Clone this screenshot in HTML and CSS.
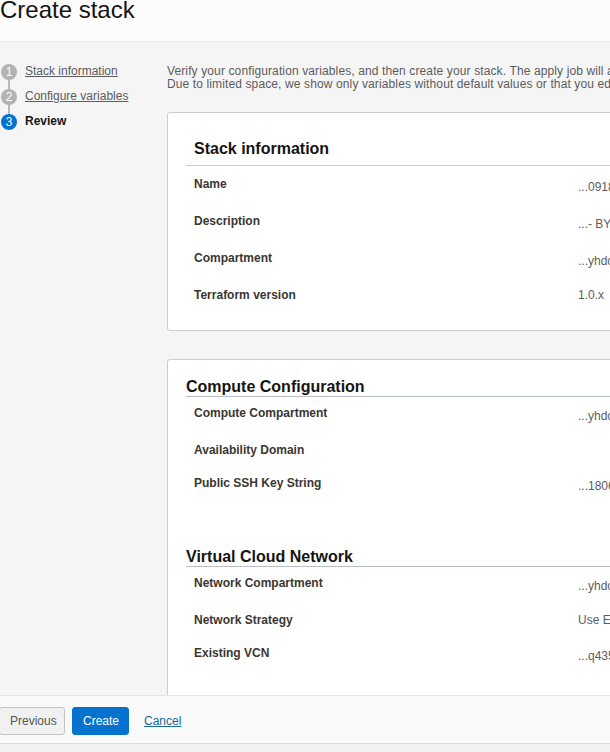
FILE: index.html
```html
<!DOCTYPE html>
<html lang="en">
<head>
<meta charset="utf-8">
<title>Create stack</title>
<link rel="stylesheet" href="styles.css">
</head>
<body>
<div class="page">
  <header class="header">
    <h1 class="title">Create stack</h1>
  </header>
  <div class="body">
    <nav class="steps">
      <div class="step done"><span class="num">1</span><a class="step-link" href="#">Stack information</a></div>
      <div class="step done"><span class="num">2</span><a class="step-link" href="#">Configure variables</a></div>
      <div class="step current"><span class="num">3</span><span class="step-label">Review</span></div>
    </nav>
    <main class="main">
      <p class="intro">Verify your configuration variables, and then create your stack. The apply job will automatically run after the stack is created.<br>Due to limited space, we show only variables without default values or that you edited.</p>

      <section class="card card-info">
        <h2 class="card-title">Stack information</h2>
        <div class="row"><div class="label">Name</div><div class="val trunc">...0918</div></div>
        <div class="row"><div class="label">Description</div><div class="val trunc">...- BY</div></div>
        <div class="row"><div class="label">Compartment</div><div class="val trunc">...yhdc</div></div>
        <div class="row"><div class="label">Terraform version</div><div class="val">1.0.x</div></div>
      </section>

      <section class="card card-vars">
        <div class="group">
          <h3 class="group-title">Compute Configuration</h3>
          <div class="row"><div class="label">Compute Compartment</div><div class="val trunc">...yhdc</div></div>
          <div class="row"><div class="label">Availability Domain</div><div class="val"></div></div>
          <div class="row"><div class="label">Public SSH Key String</div><div class="val trunc">...1806</div></div>
        </div>
        <div class="group">
          <h3 class="group-title">Virtual Cloud Network</h3>
          <div class="row"><div class="label">Network Compartment</div><div class="val trunc">...yhdc</div></div>
          <div class="row"><div class="label">Network Strategy</div><div class="val">Use Existing VCN</div></div>
          <div class="row"><div class="label">Existing VCN</div><div class="val trunc">...q435</div></div>
        </div>
      </section>
    </main>
  </div>
  <footer class="footer">
    <button class="btn btn-secondary" type="button">Previous</button>
    <button class="btn btn-primary" type="button">Create</button>
    <a class="cancel" href="#">Cancel</a>
  </footer>
</div>
</body>
</html>
```
FILE: styles.css
```css
html, body {
  margin: 0;
  padding: 0;
  overflow: hidden;
  background: #f1f1f1;
}
body {
  font-family: "Liberation Sans", Arial, sans-serif;
  font-size: 12px;
  color: #333333;
}
.page {
  width: 900px;
  height: 752px;
  display: flex;
  flex-direction: column;
}
.header {
  height: 41px;
  flex: 0 0 auto;
  background: #fcfcfc;
  border-bottom: 1px solid #e8e8e8;
}
.title {
  margin: 0;
  font-size: 24px;
  font-weight: normal;
  line-height: 20px;
  color: #161513;
}
.body {
  flex: 0 0 653px;
  height: 653px;
  display: flex;
  background: #f5f5f5;
  overflow: hidden;
}
.steps {
  flex: 0 0 167px;
  padding-top: 17px;
}
.step {
  position: relative;
  height: 25px;
  display: flex;
  align-items: center;
  gap: 8px;
  padding-left: 1px;
}
.step + .step::before {
  content: "";
  position: absolute;
  left: 8px;
  top: -6px;
  width: 2px;
  height: 12px;
  background: #b8b8b8;
}
.num {
  position: relative;
  z-index: 1;
  width: 16px;
  height: 16px;
  border-radius: 50%;
  background: #b3b3b3;
  color: #ffffff;
  font-size: 12px;
  line-height: 16px;
  text-align: center;
  flex: 0 0 16px;
}
.current .num {
  background: #0572ce;
}
.step-link {
  color: #5c5c5c;
  text-decoration: underline;
  line-height: 15px;
}
.step-label {
  font-weight: bold;
  color: #161513;
  line-height: 15px;
}
.main {
  flex: 1 1 auto;
  padding-top: 23px;
}
.intro {
  margin: 0 0 21px;
  line-height: 13px;
  letter-spacing: 0.12px;
  color: #5c5c5c;
  white-space: nowrap;
}
.card {
  width: 720px;
  background: #ffffff;
  border: 1px solid #c9cdd2;
  border-radius: 3px;
  padding: 0 18px;
}
.card-info {
  padding-top: 27px;
  padding-bottom: 9px;
  margin-bottom: 28px;
}
.card-title {
  margin: 0 0 11px;
  padding: 0 8px 7px;
  font-size: 16px;
  line-height: 18px;
  font-weight: bold;
  color: #161513;
  border-bottom: 1px solid #c5cad0;
}
.card-vars {
  padding-top: 18px;
  padding-bottom: 20px;
}
.group + .group {
  margin-top: 35px;
}
.group-title {
  margin: 0 0 9px;
  font-size: 16px;
  line-height: 18px;
  font-weight: bold;
  color: #161513;
  border-bottom: 1px solid #b9bec5;
}
.row {
  display: flex;
  align-items: flex-start;
  padding: 0 0 18px 8px;
}
.label {
  flex: 0 0 384px;
  font-weight: bold;
  color: #3a3632;
  line-height: 15px;
}
.val {
  color: #5c5c5c;
  line-height: 15px;
  min-height: 15px;
}
.val.trunc {
  padding-top: 3px;
  padding-bottom: 1px;
}
.footer {
  flex: 0 0 auto;
  background: #fafafa;
  border-top: 1px solid #e3e3e3;
  border-bottom: 1px solid #dcdcdc;
  display: flex;
  align-items: flex-start;
  padding-top: 11px;
  box-sizing: border-box;
  height: 49px;
}
.btn {
  font-family: "Liberation Sans", Arial, sans-serif;
  font-size: 12px;
  height: 28px;
  padding: 0 10px;
  border-radius: 3px;
  cursor: pointer;
}
.btn-secondary {
  margin-left: -1px;
  width: 66px;
  background: #f1f1f1;
  border: 1px solid #c4c4c4;
  color: #555555;
}
.btn-primary {
  margin-left: 7px;
  width: 57px;
  background: #0572ce;
  border: 1px solid #0572ce;
  color: #ffffff;
}
.cancel {
  margin-left: 15px;
  line-height: 28px;
  color: #16699a;
  text-decoration: underline;
}
```
